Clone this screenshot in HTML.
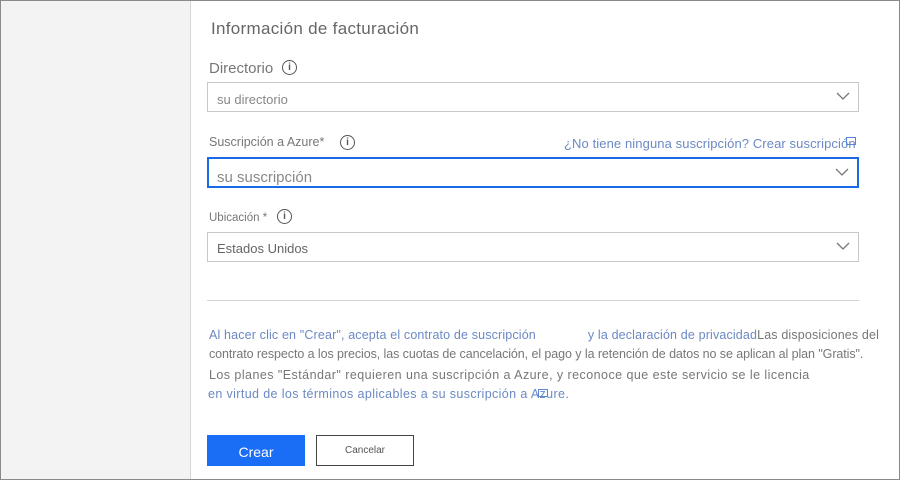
<!DOCTYPE html>
<html><head><meta charset="utf-8"><style>
*{margin:0;padding:0;box-sizing:border-box}
body{width:900px;height:480px;position:relative;background:#fff;font-family:"Liberation Sans",sans-serif;overflow:hidden}
.frame{position:absolute;left:0;top:0;width:900px;height:480px;border:1px solid #8a8a8a;pointer-events:none}
.left{position:absolute;left:0;top:0;width:191px;height:480px;background:#f3f3f3;border-right:1px solid #d6d6d6}
.t{position:absolute;white-space:nowrap}
.box{position:absolute;left:207px;width:652px;height:30px;border:1px solid #c8c8c8;background:#fff}
.chev{position:absolute;right:8px;top:9px}
.info{position:absolute;width:15px;height:15px;border:1.3px solid #555;border-radius:50%;font-size:10px;color:#555;text-align:center;line-height:13px;font-weight:bold}
.p{position:absolute;left:209px;font-size:12.5px;color:#777;white-space:nowrap}
.lnk{color:#6b89c4}
.ext{position:absolute;width:10px;height:8px;border:1px solid #5a86d8}
</style></head><body>
<div class="left"></div>
<div class="t" style="left:211px;top:19px;font-size:17px;color:#666;letter-spacing:0.3px">Información de facturación</div>
<div class="t" style="left:209px;top:60px;font-size:15px;color:#777">Directorio</div>
<div class="info" style="left:282px;top:60px">i</div>
<div class="box" style="top:82px"><span class="t" style="left:9px;top:9px;font-size:13px;color:#888">su directorio</span>
<svg class="chev" width="14" height="9"><path d="M1 1l6 6 6-6" stroke="#777" fill="none" stroke-width="1.3"/></svg></div>
<div class="t" style="left:209px;top:135px;font-size:12.5px;color:#777">Suscripción a Azure*</div>
<div class="info" style="left:340px;top:135px">i</div>
<div class="t lnk" style="left:564px;top:136px;font-size:13px;letter-spacing:0.1px">¿No tiene ninguna suscripción? Crear suscripción</div>
<div class="ext" style="left:846px;top:137px"></div>
<div class="box" style="top:157px;height:31px;border:2px solid #1a6ae8"><span class="t" style="left:8px;top:10px;font-size:15px;color:#888">su suscripción</span>
<svg class="chev" width="14" height="9"><path d="M1 1l6 6 6-6" stroke="#777" fill="none" stroke-width="1.3"/></svg></div>
<div class="t" style="left:209px;top:212px;font-size:11.5px;color:#777">Ubicación *</div>
<div class="info" style="left:277px;top:209px">i</div>
<div class="box" style="top:232px"><span class="t" style="left:9px;top:8px;font-size:13px;color:#666">Estados Unidos</span>
<svg class="chev" width="14" height="9"><path d="M1 1l6 6 6-6" stroke="#777" fill="none" stroke-width="1.3"/></svg></div>
<div style="position:absolute;left:207px;top:300px;width:652px;height:1px;background:#d6d6d6"></div>
<div class="p" style="top:328px;letter-spacing:0.15px"><span class="lnk">Al hacer clic en "Crear", acepta el contrato de suscripción</span><span style="display:inline-block;width:52px"></span><span class="lnk">y la declaración de privacidad</span>Las disposiciones del</div>
<div class="p" style="top:347px;letter-spacing:-0.08px">contrato respecto a los precios, las cuotas de cancelación, el pago y la retención de datos no se aplican al plan "Gratis".</div>
<div class="p" style="top:368px;letter-spacing:0.45px">Los planes "Estándar" requieren una suscripción a Azure, y reconoce que este servicio se le licencia</div>
<div class="p" style="top:387px;left:208px;letter-spacing:0.38px"><span class="lnk">en virtud de los términos aplicables a su suscripción a Azure.</span></div>
<div class="ext" style="left:538px;top:389px"></div>
<div style="position:absolute;left:207px;top:435px;width:98px;height:31px;background:#1a6ef5;color:#fff;font-size:14px;text-align:center;line-height:35px">Crear</div>
<div style="position:absolute;left:316px;top:435px;width:98px;height:31px;border:1px solid #444;color:#555;font-size:10px;text-align:center;line-height:30px">Cancelar</div>
<div class="frame"></div>
</body></html>
